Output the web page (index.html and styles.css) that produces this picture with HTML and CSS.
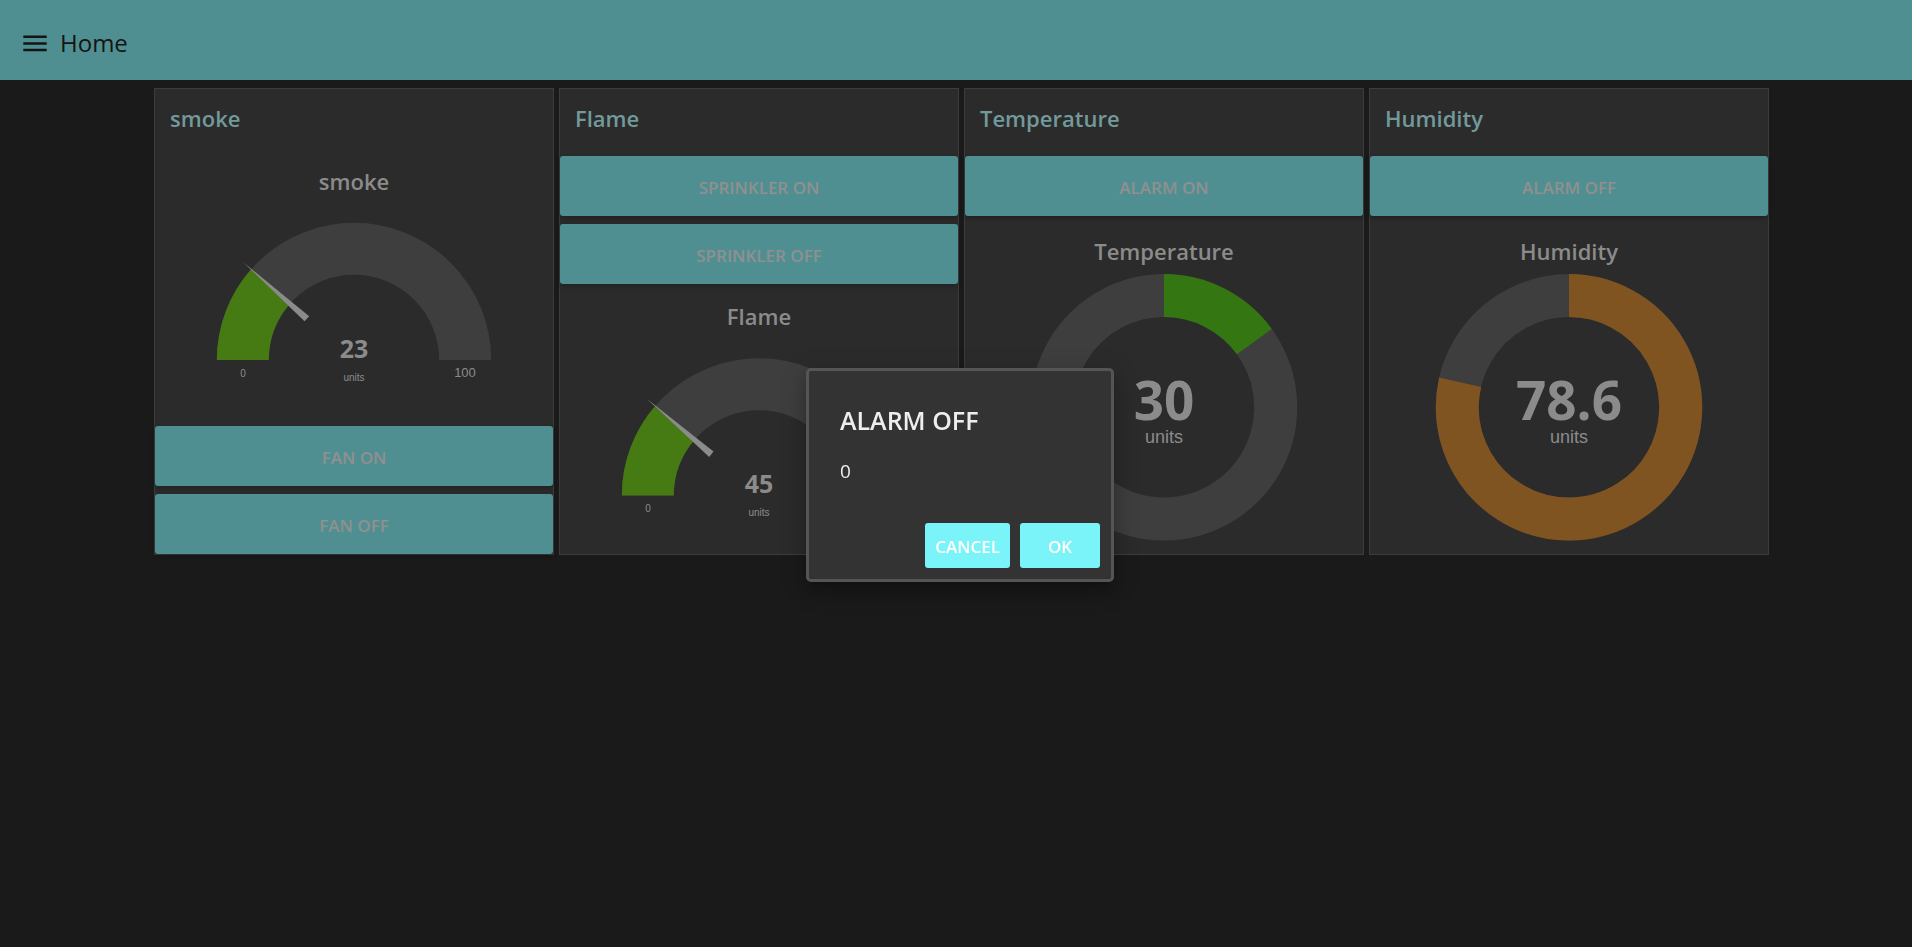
FILE: index.html
```html
<!DOCTYPE html>
<html lang="en">
<head>
<meta charset="utf-8">
<title>Home</title>
<link rel="stylesheet" href="styles.css">
</head>
<body>
<header class="toolbar">
  <button class="menu-button" type="button" aria-label="Menu">
    <svg class="menu-icon" viewBox="0 0 22 16" aria-hidden="true"><path d="M0 1.7H22M0 8H22M0 14.1H22"/></svg>
  </button>
  <h1 class="page-title">Home</h1>
</header>

<main class="board">
  <section class="card">
    <h2 class="card-title">smoke</h2>
    <div class="widgets">
      <svg class="gauge" viewBox="0 0 398 262" role="img" aria-label="smoke gauge">
        <text class="gauge-title" x="199" y="34">smoke</text>
        <path class="arc track" d="M87.8 204A111.2 111.2 0 0 1 310.2 204"/>
        <path class="arc low" pathLength="100" stroke-dasharray="23 200" d="M87.8 204A111.2 111.2 0 0 1 310.2 204"/>
        <path class="needle" d="M88.500 106.500L154.200 160.300L149.500 165.200Z"/>
        <text class="gauge-value" x="199" y="202">23</text>
        <text class="gauge-small" x="199" y="225">units</text>
        <text class="gauge-small" x="88" y="221">0</text>
        <text class="gauge-max" x="310" y="221">100</text>
      </svg>
      <button class="action" type="button">FAN ON</button>
      <button class="action" type="button">FAN OFF</button>
    </div>
  </section>

  <section class="card">
    <h2 class="card-title">Flame</h2>
    <div class="widgets">
      <button class="action" type="button">SPRINKLER ON</button>
      <button class="action" type="button">SPRINKLER OFF</button>
      <svg class="gauge" viewBox="0 0 398 262" role="img" aria-label="Flame gauge">
        <text class="gauge-title" x="199" y="33">Flame</text>
        <path class="arc track" d="M87.8 203.500A111.2 111.2 0 0 1 310.2 203.500"/>
        <path class="arc low" pathLength="100" stroke-dasharray="22.5 200" d="M87.8 203.500A111.2 111.2 0 0 1 310.2 203.500"/>
        <path class="needle" d="M86.500 106.500L153.500 159.500L149.200 165Z"/>
        <text class="gauge-value" x="199" y="201">45</text>
        <text class="gauge-small" x="199" y="224">units</text>
        <text class="gauge-small" x="88" y="220">0</text>
        <text class="gauge-max" x="310" y="220">200</text>
      </svg>
    </div>
  </section>

  <section class="card">
    <h2 class="card-title">Temperature</h2>
    <div class="widgets">
      <button class="action" type="button">ALARM ON</button>
      <svg class="gauge" viewBox="0 0 398 330" role="img" aria-label="Temperature gauge">
        <text class="gauge-title" x="199" y="36">Temperature</text>
        <path class="ring track" d="M199 71.600A111.700 111.700 0 1 1 198.990 71.600Z"/>
        <path class="ring mild" pathLength="100" stroke-dasharray="15 200" d="M199 71.600A111.700 111.700 0 1 1 198.990 71.600Z"/>
        <text class="ring-value" x="199" y="196">30</text>
        <text class="ring-units" x="199" y="219">units</text>
      </svg>
    </div>
  </section>

  <section class="card">
    <h2 class="card-title">Humidity</h2>
    <div class="widgets">
      <button class="action" type="button">ALARM OFF</button>
      <svg class="gauge" viewBox="0 0 398 330" role="img" aria-label="Humidity gauge">
        <text class="gauge-title" x="199" y="36">Humidity</text>
        <path class="ring track" d="M199 71.600A111.700 111.700 0 1 1 198.990 71.600Z"/>
        <path class="ring high" pathLength="100" stroke-dasharray="78.6 200" d="M199 71.600A111.700 111.700 0 1 1 198.990 71.600Z"/>
        <text class="ring-value" x="199" y="196">78.6</text>
        <text class="ring-units" x="199" y="219">units</text>
      </svg>
    </div>
  </section>
</main>

<div class="overlay">
  <div class="dialog" role="dialog" aria-modal="true" aria-labelledby="dialog-title">
    <div class="dialog-body">
      <h2 class="dialog-title" id="dialog-title">ALARM OFF</h2>
      <p class="dialog-text">0</p>
    </div>
    <div class="dialog-actions">
      <button class="dialog-button" type="button">CANCEL</button>
      <button class="dialog-button" type="button">OK</button>
    </div>
  </div>
</div>
</body>
</html>
```
FILE: styles.css
```css
* {
  box-sizing: border-box;
}

body {
  margin: 0;
  min-height: 100vh;
  background: #1a1a1a;
  color: #8b8b8b;
  font-family: "Open Sans", "Noto Sans", sans-serif;
}

h1, h2, p {
  margin: 0;
}

button {
  border: 0;
  font: inherit;
  cursor: pointer;
}

.toolbar {
  display: flex;
  align-items: center;
  gap: 13px;
  height: 80px;
  padding: 5px 23px 0;
  background: #508f91;
  color: #141414;
}

.menu-button {
  display: flex;
  padding: 1px 0 0;
  background: none;
  color: inherit;
}

.menu-icon {
  width: 24px;
  height: 17px;
  fill: none;
  stroke: currentColor;
  stroke-width: 2.3;
}

.page-title {
  font-size: 24px;
  font-weight: 400;
  line-height: 32px;
}

.board {
  display: grid;
  grid-template-columns: repeat(4, minmax(0, 400px));
  justify-content: center;
  gap: 5px;
  padding: 8px 0 8px 11px;
}

.card {
  border: 1px solid #3c3c3c;
  background: #2b2b2b;
}

.card-title {
  padding: 13px 15px 22px;
  color: #729a9b;
  font-size: 22px;
  font-weight: 600;
  line-height: 32px;
}

.widgets {
  display: flex;
  flex-direction: column;
  gap: 8px;
}

.action {
  height: 60px;
  padding: 2px 8px 0;
  border-radius: 3px;
  background: #508f91;
  box-shadow: 0 2px 5px rgba(0, 0, 0, 0.26);
  color: #909090;
  font-size: 17px;
  font-weight: 600;
}

.gauge {
  display: block;
  width: 100%;
  height: auto;
}

.gauge text {
  fill: #8b8b8b;
  text-anchor: middle;
}

.gauge-title {
  font-size: 22px;
  font-weight: 600;
}

.gauge-value {
  font-size: 25px;
  font-weight: 700;
}

.gauge-small,
.gauge-max,
.ring-units {
  font-family: "Liberation Sans", Arial, sans-serif;
}

.gauge-small {
  font-size: 10px;
}

.gauge-max {
  font-size: 13px;
}

.ring-value {
  font-size: 53px;
  font-weight: 700;
}

.ring-units {
  font-size: 18px;
}

.arc,
.ring {
  fill: none;
}

.arc {
  stroke-width: 52;
}

.ring {
  stroke-width: 43;
}

.track {
  stroke: #3e3e3e;
}

.low {
  stroke: #467a12;
}

.mild {
  stroke: #347611;
}

.high {
  stroke: #805421;
}

.needle {
  fill: #8b8b8b;
}

.overlay {
  position: fixed;
  inset: 0;
  display: flex;
  align-items: center;
  justify-content: center;
  padding: 3px 0 0 8px;
}

.dialog {
  min-width: 308px;
  border: 3px solid #555;
  border-radius: 5px;
  background: #333;
  box-shadow: 0 7px 8px -4px rgba(0, 0, 0, 0.2), 0 13px 19px 2px rgba(0, 0, 0, 0.14), 0 5px 24px 4px rgba(0, 0, 0, 0.12);
  color: #eee;
}

.dialog-body {
  padding: 31px 31px 36px;
}

.dialog-title {
  font-size: 25px;
  font-weight: 600;
  line-height: 36px;
}

.dialog-text {
  padding-top: 17px;
  font-size: 19px;
  line-height: 32px;
}

.dialog-actions {
  display: flex;
  justify-content: flex-end;
  gap: 10px;
  padding: 0 11px 11px;
}

.dialog-button {
  min-width: 80px;
  height: 45px;
  padding: 2px 10px 0;
  border-radius: 3px;
  background: #7bf4f9;
  color: #fff;
  font-size: 17px;
  font-weight: 600;
}

@media (max-width: 1200px) {
  .board {
    grid-template-columns: repeat(2, minmax(0, 400px));
  }
}
```
